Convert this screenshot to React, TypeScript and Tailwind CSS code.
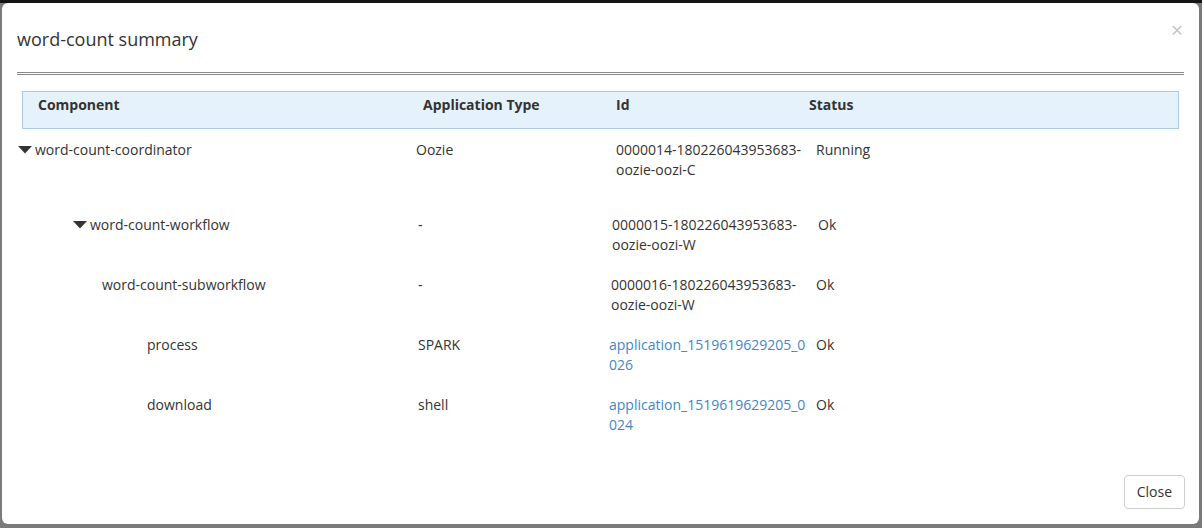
import React from 'react';

type Row = {
  name: string;
  indent: number;
  caret?: boolean;
  type: string;
  typePad: number;
  id: string[];
  idPad: number;
  link?: boolean;
  status: string;
  statusPad: number;
  gapAfter: number;
};

const rows: Row[] = [
  { name: 'word-count-coordinator', indent: 1, caret: true, type: 'Oozie', typePad: 0, id: ['0000014-180226043953683-', 'oozie-oozi-C'], idPad: 7, status: 'Running', statusPad: 7, gapAfter: 35 },
  { name: 'word-count-workflow', indent: 56, caret: true, type: '-', typePad: 2, id: ['0000015-180226043953683-', 'oozie-oozi-W'], idPad: 3, status: 'Ok', statusPad: 9, gapAfter: 20 },
  { name: 'word-count-subworkflow', indent: 85, type: '-', typePad: 2, id: ['0000016-180226043953683-', 'oozie-oozi-W'], idPad: 2, status: 'Ok', statusPad: 7, gapAfter: 20 },
  { name: 'process', indent: 130, type: 'SPARK', typePad: 2, id: ['application_1519619629205_0', '026'], idPad: 0, link: true, status: 'Ok', statusPad: 7, gapAfter: 20 },
  { name: 'download', indent: 130, type: 'shell', typePad: 2, id: ['application_1519619629205_0', '024'], idPad: 0, link: true, status: 'Ok', statusPad: 7, gapAfter: 0 },
];

const Caret = () => (
  <svg width="14" height="8" viewBox="0 0 14 8" className="mr-[3px] shrink-0">
    <path d="M0 0 H14 L7 7.5 Z" fill="#333" />
  </svg>
);

const App = () => {
  return (
    <div
      className="w-[1202px] h-[528px] bg-[#7b7b7b] overflow-hidden relative"
      style={{ fontFamily: '"Open Sans", "Noto Sans", sans-serif' }}
    >
      {/* dimmed navbar behind */}
      <div className="absolute top-0 left-0 w-full h-[3px] bg-[#151515]" />

      {/* Modal */}
      <div className="relative ml-[2px] mt-[3px] w-[1197px] h-[521px] bg-white rounded-[6px] flex flex-col text-[#333] text-[14px] leading-[20px]">
        {/* Header */}
        <div className="flex items-start justify-between pl-[15px] pr-[16px] pt-[23px]">
          <h4 className="text-[18px] leading-[26px]">word-count summary</h4>
          <span className="text-[#c4c4c4] text-[21px] leading-[21px] mt-[-6px]">×</span>
        </div>

        <div className="mx-[15px] mt-[20px] border-t-[3px] border-double border-[#8a8a8a]" />

        {/* Table header */}
        <div className="mx-[20px] mt-[16px] h-[38px] bg-[#e5f1fb] border border-[#abcbe9] grid grid-cols-[400px_193px_193px_1fr] pt-[3px] font-bold">
          <div className="pl-[15px]">Component</div>
          <div>Application Type</div>
          <div>Id</div>
          <div>Status</div>
        </div>

        {/* Rows */}
        <div className="mt-[11px] pl-[15px]">
          {rows.map((r) => (
            <div
              key={r.name}
              className="grid grid-cols-[399px_193px_200px_1fr]"
              style={{ marginBottom: r.gapAfter }}
            >
              <div className="flex items-center h-[20px]" style={{ paddingLeft: r.indent }}>
                {r.caret && <Caret />}
                <span>{r.name}</span>
              </div>
              <div style={{ paddingLeft: r.typePad }}>{r.type}</div>
              <div style={{ paddingLeft: r.idPad }} className={r.link ? 'text-[#3f87c9]' : ''}>
                {r.id[0]}
                <br />
                {r.id[1]}
              </div>
              <div style={{ paddingLeft: r.statusPad }}>{r.status}</div>
            </div>
          ))}
        </div>

        {/* Footer */}
        <div className="mt-auto flex justify-end pr-[14px] pb-[15px]">
          <button className="h-[34px] px-[12px] border border-[#cfcfcf] rounded-[4px] bg-white text-[14px] text-[#333]">
            Close
          </button>
        </div>
      </div>
    </div>
  );
};

export default App;
